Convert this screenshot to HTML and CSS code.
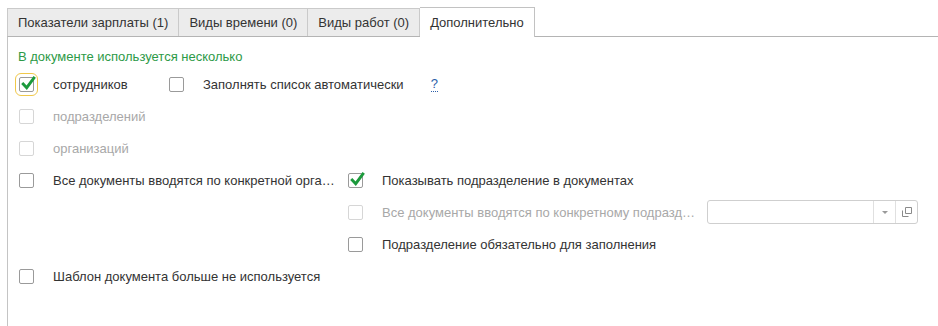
FILE: index.html
```html
<!DOCTYPE html>
<html lang="ru">
<head>
    <meta charset="UTF-8">
    <title>Дополнительно</title>
    <link rel="stylesheet" href="styles.css">
</head>
<body>
    <div class="tabs">
        <div class="tab">Показатели зарплаты (1)</div>
        <div class="tab">Виды времени (0)</div>
        <div class="tab">Виды работ (0)</div>
        <div class="tab active">Дополнительно</div>
    </div>

    <div class="panel">
        <div class="group-title">В документе используется несколько</div>

        <div class="row">
            <span class="check checked focused"><svg viewBox="0 0 15 15"><polyline points="3,7.5 6.3,11 13,2"/></svg></span>
            <span class="label first">сотрудников</span>
            <span class="check"></span>
            <span class="label">Заполнять список автоматически</span>
            <span class="help">?</span>
        </div>

        <div class="row">
            <span class="check disabled"></span>
            <span class="label muted">подразделений</span>
        </div>

        <div class="row">
            <span class="check disabled"></span>
            <span class="label muted">организаций</span>
        </div>

        <div class="row">
            <div class="col-left">
                <span class="check"></span>
                <span class="label clip">Все документы вводятся по конкретной организации</span>
            </div>
            <span class="check checked"><svg viewBox="0 0 15 15"><polyline points="3,7.5 6.3,11 13,2"/></svg></span>
            <span class="label">Показывать подразделение в документах</span>
        </div>

        <div class="row">
            <div class="col-left"></div>
            <span class="check disabled"></span>
            <span class="label muted clip wide">Все документы вводятся по конкретному подразделению</span>
            <div class="field">
                <div class="field-input"></div>
                <div class="field-btn"><svg viewBox="0 0 8 5"><polygon points="1,1 7,1 4,4"/></svg></div>
                <div class="field-btn"><svg viewBox="0 0 12 12"><path d="M4.5 1.5h6v6h-6z M1.5 4.5v6h6"/></svg></div>
            </div>
        </div>

        <div class="row">
            <div class="col-left"></div>
            <span class="check"></span>
            <span class="label">Подразделение обязательно для заполнения</span>
        </div>

        <div class="row">
            <span class="check"></span>
            <span class="label">Шаблон документа больше не используется</span>
        </div>
    </div>
</body>
</html>
```

FILE: styles.css
```css
body {
    margin: 0;
    background: #fff;
    font-family: "Liberation Sans", Arial, sans-serif;
    font-size: 13px;
    color: #333;
    height: 326px;
    overflow: hidden;
}

.tabs {
    display: flex;
    align-items: flex-end;
    padding: 8px 0 0 7px;
    height: 28px;
}

.tab {
    height: 27px;
    line-height: 27px;
    padding: 0 10px;
    background: #ececec;
    border: 1px solid #cacaca;
    border-bottom: none;
    border-left: none;
}

.tab:first-child {
    border-left: 1px solid #cacaca;
}

.tab.active {
    background: #fff;
    height: 29px;
    line-height: 29px;
    margin-bottom: -1px;
    position: relative;
    border-color: #c2c2c2;
}

.panel {
    margin-left: 7px;
    border-top: 1px solid #b4b4b4;
    border-left: 1px solid #c4c4c4;
    height: 300px;
    padding-left: 10px;
}

.group-title {
    color: #2d9a47;
    line-height: 16px;
    padding-top: 12px;
    height: 19px;
}

.row {
    display: flex;
    align-items: center;
    height: 32px;
}

.col-left {
    display: flex;
    align-items: center;
    width: 329px;
}

.check {
    position: relative;
    flex: none;
    width: 13px;
    height: 13px;
    margin-left: 1px;
    border: 1px solid #9a9a9a;
    border-radius: 2px;
    background: #fff;
}

.check.disabled {
    border-color: #d6d6d6;
}

.check.focused {
    outline: 1px solid #f0c84a;
    outline-offset: 3px;
}

.check svg {
    position: absolute;
    left: 0;
    top: -2px;
    width: 16px;
    height: 16px;
    fill: none;
    stroke: #1c9a3c;
    stroke-width: 2.7;
    stroke-linecap: square;
}

.label {
    margin-left: 19px;
    white-space: nowrap;
}

.label.first {
    width: 115px;
}

.label.muted {
    color: #a8a8a8;
}

.label.clip {
    overflow: hidden;
    text-overflow: ellipsis;
    width: 283px;
}

.label.wide {
    width: 315px;
}

.help {
    margin-left: 27px;
    color: #2d5ea8;
    border-bottom: 1px dotted #2d5ea8;
    line-height: 14px;
}

.field {
    display: flex;
    margin-left: 10px;
    height: 22px;
    border: 1px solid #cfcfcf;
    border-radius: 3px;
}

.field-input {
    width: 165px;
}

.field-btn {
    display: flex;
    align-items: center;
    justify-content: center;
    width: 21px;
    border-left: 1px solid #e0e0e0;
}

.field-btn svg {
    width: 8px;
    height: 5px;
    fill: #9a9a9a;
}

.field-btn:last-child svg {
    width: 12px;
    height: 12px;
    fill: none;
    stroke: #8a8a8a;
    stroke-width: 1;
}
```
